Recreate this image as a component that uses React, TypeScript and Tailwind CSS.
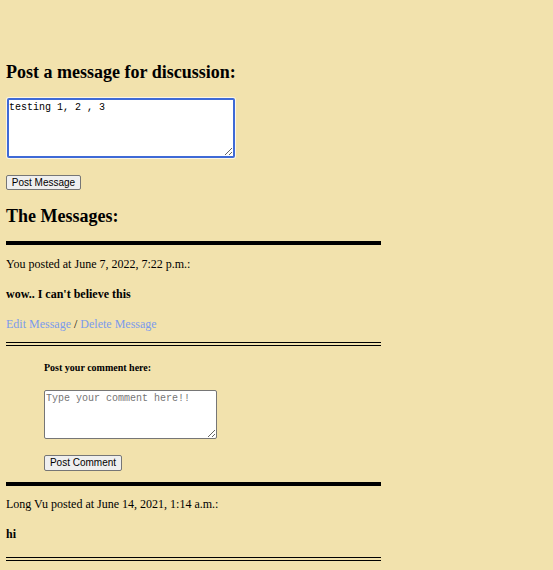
import React from "react";

const serif = { fontFamily: '"Liberation Serif", "Times New Roman", serif' };

function Solid() {
  return <div className="w-[375px] h-[4px] bg-black" />;
}
function Double() {
  return <div className="w-[375px] h-0 border-t-[4px] border-double border-black" />;
}

export default function App() {
  return (
    <div className="min-h-[570px] w-full bg-[#f2e2ad] text-black pt-[60px] pl-[6px]" style={serif}>
      <div className="text-[18px] leading-[24px] font-bold">Post a message for discussion:</div>
      <div className="mt-[14px] ml-[1px] w-[228px] h-[60px]">
        <textarea
          defaultValue="testing 1, 2 , 3"
          className="block w-[228px] h-[60px] border-2 border-[#3f6ad6] rounded-[2px] bg-white px-[0px] py-[2px] text-[10px] leading-[12px] resize-y outline-none shadow-[0_0_0_1px_rgba(255,255,255,0.7)]"
          style={{ fontFamily: '"Liberation Mono", "Courier New", monospace' }}
        />
      </div>
      <div className="mt-[17px]">
        <button
          className="block w-[75px] h-[15px] border border-[#767676] rounded-[2px] bg-[#efefef] text-[10px] leading-[13px] p-0"
          style={{ fontFamily: '"Liberation Sans", Arial, sans-serif' }}
        >
          Post Message
        </button>
      </div>
      <div className="mt-[14px] text-[18px] leading-[24px] font-bold">The Messages:</div>
      <div className="mt-[13px]">
        <Solid />
      </div>
      <div className="mt-[4px] text-[12px] leading-[30px]">You posted at June 7, 2022, 7:22 p.m.:</div>
      <div className="text-[12px] leading-[30px] font-bold">wow.. I can't believe this</div>
      <div className="text-[12px] leading-[30px]">
        <a href="#" className="text-[#7b9bec]">Edit Message</a> / <a href="#" className="text-[#7b9bec]">Delete Message</a>
      </div>
      <div className="mt-[3px]">
        <Double />
      </div>
      <div className="ml-[38px]">
        <div className="mt-[15px] text-[10px] leading-[14px] font-bold">Post your comment here:</div>
        <textarea
          placeholder="Type your comment here!!"
          className="block mt-[15px] w-[173px] h-[49px] border border-[#767676] rounded-[2px] bg-white px-[1px] py-[2px] text-[10px] leading-[12px] resize-y outline-none placeholder:text-[#757575]"
          style={{ fontFamily: '"Liberation Mono", "Courier New", monospace' }}
        />
        <button
          className="block mt-[16px] w-[78px] h-[16px] border border-[#767676] rounded-[2px] bg-[#efefef] text-[10px] leading-[14px] p-0"
          style={{ fontFamily: '"Liberation Sans", Arial, sans-serif' }}
        >
          Post Comment
        </button>
      </div>
      <div className="mt-[11px]">
        <Solid />
      </div>
      <div className="mt-[3px] text-[12px] leading-[30px]">Long Vu posted at June 14, 2021, 1:14 a.m.:</div>
      <div className="text-[12px] leading-[30px] font-bold">hi</div>
      <div className="mt-[8px] pb-[9px]">
        <Double />
      </div>
    </div>
  );
}
